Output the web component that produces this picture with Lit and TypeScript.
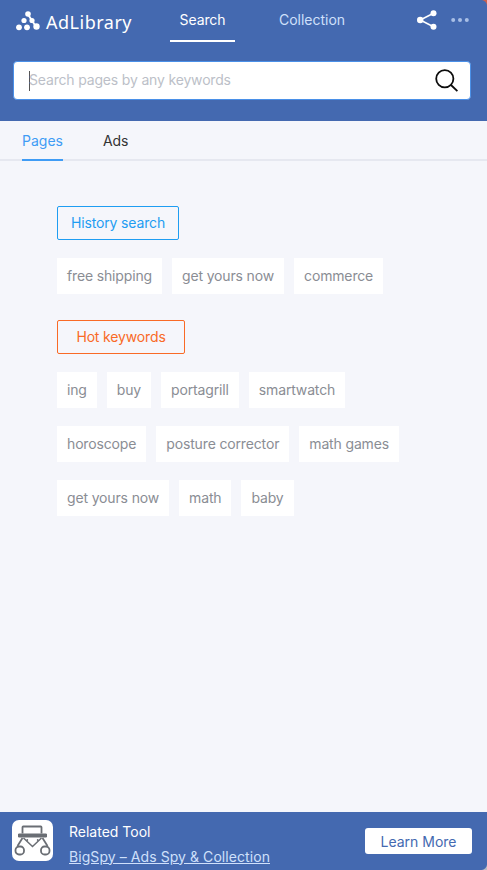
import { LitElement, html, css } from "lit";
import { customElement } from "lit/decorators.js";

const chip = (t: string) => html`<span class="chip">${t}</span>`;

@customElement("app-root")
export class AppRoot extends LitElement {
  static styles = css`
    :host { display: flex; flex-direction: column; width: 487px; height: 870px; background: #f5f6fb; font-family: Inter, "Liberation Sans", sans-serif; color: #333; overflow: hidden; position: relative; }
    .corner { position: absolute; width: 6px; height: 6px; right: 0; }
    .corner.tr { top: 0; background: radial-gradient(circle at 0 100%, transparent 5.5px, #c8604f 6.5px); }
    .corner.br { bottom: 0; background: radial-gradient(circle at 0 0, transparent 5.5px, #b9bcc4 6.5px); }
    .head { background: #4469b0; height: 121px; box-sizing: border-box; padding: 0 16px 0 13px; flex: none; display: flex; flex-direction: column; }
    .top { height: 42px; display: flex; align-items: stretch; }
    .logo { display: flex; align-items: center; gap: 6px; width: 157px; padding-left: 3px; box-sizing: border-box; color: #fff; font-size: 18px; letter-spacing: 0.5px; font-family: "Noto Sans", sans-serif; }
    .logo span { margin-top: 2px; }
    .nav { width: 65px; display: flex; align-items: center; justify-content: center; font-size: 14px; color: #fff; border-bottom: 2px solid transparent; padding-bottom: 2px; box-sizing: border-box; white-space: nowrap; }
    .nav.on { border-bottom-color: #fff; letter-spacing: -0.1px; }
    .nav.off { margin-left: 44px; color: #cfe0fb; width: 66px; }
    .right { margin-left: auto; display: flex; align-items: center; gap: 14px; padding-bottom: 3px; margin-right: 2px; }
    .search { margin-top: 19px; height: 39px; box-sizing: border-box; background: #fff; border: 1px solid #4a90e8; border-radius: 4px; display: flex; align-items: center; padding: 0 0 0 15px; }
    .caret { width: 1px; height: 20px; background: #555; flex: none; margin-right: -1px; }
    .ph { font-size: 14px; color: #bcbfc8; flex: 1; white-space: nowrap; letter-spacing: -0.17px; padding-bottom: 2px; }
    .mag { margin-right: 12px; display: block; }
    .tabs { height: 40px; flex: none; display: flex; padding-left: 22px; gap: 40px; border-bottom: 2px solid #e6e8f0; box-sizing: border-box; }
    .tab { height: 40px; box-sizing: border-box; padding-top: 11px; font-size: 14px; line-height: 17px; color: #333; letter-spacing: -0.1px; }
    .tab.on { color: #3f9cf5; border-bottom: 2px solid #3f9cf5; letter-spacing: 0; }
    .body { flex: 1; padding: 45px 0 0 57px; display: flex; flex-direction: column; align-items: flex-start; }
    .label { height: 34px; box-sizing: border-box; border: 1px solid #1e9df2; color: #1e9df2; border-radius: 2px; font-size: 14px; display: flex; align-items: center; justify-content: center; width: 122px; letter-spacing: -0.15px; padding-bottom: 2px; }
    .label.hot { border-color: #f96a26; color: #f96a26; width: 128px; }
    .chips { display: flex; gap: 10px; margin-top: 18px; margin-bottom: 26px; }
    .chips.rows { flex-direction: column; gap: 18px; margin-bottom: 0; }
    .row { display: flex; gap: 10px; }
    .chip { height: 36px; box-sizing: border-box; padding: 0 10px 2px; background: #fff; color: #8a8d94; font-size: 14px; display: flex; align-items: center; white-space: nowrap; letter-spacing: -0.15px; }
    .foot { height: 58px; flex: none; background: #4469b0; display: flex; align-items: center; padding: 0 15px 0 12px; color: #fff; }
    .tool { width: 41px; height: 41px; background: #fff; border-radius: 7px; flex: none; display: flex; align-items: center; justify-content: center; margin-bottom: 1px; }
    .txt { margin-left: 16px; display: flex; flex-direction: column; gap: 7px; font-size: 14px; line-height: 18px; padding-top: 6px; }
    .link { color: #cfe0fb; text-decoration: underline; white-space: nowrap; letter-spacing: 0.07px; }
    .btn { margin-left: auto; background: #fff; color: #4469b0; width: 107px; height: 26px; border-radius: 3px; font-size: 14px; display: flex; align-items: center; justify-content: center; }
  `;

  render() {
    return html`
      <div class="head">
        <div class="top">
          <div class="logo">
            <svg width="24" height="20" viewBox="0 0 24 20" fill="#fff">
              <circle cx="12" cy="3" r="2.8"/><circle cx="8" cy="9.5" r="2.6"/><circle cx="16" cy="9.5" r="2.6"/>
              <circle cx="3" cy="16.3" r="2.9"/><circle cx="11" cy="16.3" r="2.9"/><circle cx="20.5" cy="15.5" r="3.2"/>
              <path d="M13.5 4l6.5 10-1.6 1-6.5-10z"/>
            </svg>
            <span>AdLibrary</span>
          </div>
          <div class="nav on">Search</div>
          <div class="nav off">Collection</div>
          <div class="right">
            <svg width="20" height="20" viewBox="0 0 20 20" fill="#fff" stroke="#fff">
              <circle cx="16.5" cy="3.2" r="3" stroke="none"/><circle cx="3.2" cy="10" r="3.2" stroke="none"/><circle cx="16.5" cy="16.8" r="3" stroke="none"/>
              <path d="M16.5 3.2 3.2 10l13.3 6.8" fill="none" stroke-width="1.6"/>
            </svg>
            <svg width="18" height="6" viewBox="0 0 18 6" fill="#a9bfe6"><circle cx="2.2" cy="3" r="2"/><circle cx="9" cy="3" r="2"/><circle cx="15.8" cy="3" r="2"/></svg>
          </div>
        </div>
        <div class="search">
          <span class="caret"></span><span class="ph">Search pages by any keywords</span>
          <svg class="mag" width="23" height="23" viewBox="0 0 23 23" fill="none" stroke="#0c0c0c" stroke-width="1.8">
            <circle cx="9.8" cy="9.8" r="8.6"/><path d="M16 16l6.4 6.2"/>
          </svg>
        </div>
      </div>
      <div class="tabs"><div class="tab on">Pages</div><div class="tab">Ads</div></div>
      <div class="body">
        <div class="label">History search</div>
        <div class="chips">${["free shipping", "get yours now", "commerce"].map(chip)}</div>
        <div class="label hot">Hot keywords</div>
        <div class="chips rows">
          <div class="row">${["ing", "buy", "portagrill", "smartwatch"].map(chip)}</div>
          <div class="row">${["horoscope", "posture corrector", "math games"].map(chip)}</div>
          <div class="row">${["get yours now", "math", "baby"].map(chip)}</div>
        </div>
      </div>
      <div class="foot">
        <div class="tool">
          <svg width="37" height="33" viewBox="0 0 37 33" fill="none" stroke="#6a6e74" stroke-width="1.8">
            <path d="M8.5 9.5V3.2a.7.7 0 0 1 .7-.7h17.6a.7.7 0 0 1 .7.7v6.3"/>
            <path d="M4.5 10h28v3h-28z" fill="#6a6e74" stroke-width="1"/>
            <path d="M9.5 14l9 8.5 9-8.5" stroke-width="1.5"/>
            <circle cx="13.3" cy="16" r=".9" fill="#6a6e74" stroke="none"/><circle cx="23.7" cy="16" r=".9" fill="#6a6e74" stroke="none"/>
            <path d="M8.5 14 3.5 22"/><path d="M28.5 14l5 8"/>
            <rect x="1.5" y="22.5" width="8.5" height="8" rx="3.5"/><rect x="27" y="22.5" width="8.5" height="8" rx="3.5"/>
          </svg>
        </div>
        <div class="txt"><span>Related Tool</span><span class="link">BigSpy – Ads Spy &amp; Collection</span></div>
        <div class="btn">Learn More</div>
      </div>
      <span class="corner tr"></span><span class="corner br"></span>
    `;
  }
}
